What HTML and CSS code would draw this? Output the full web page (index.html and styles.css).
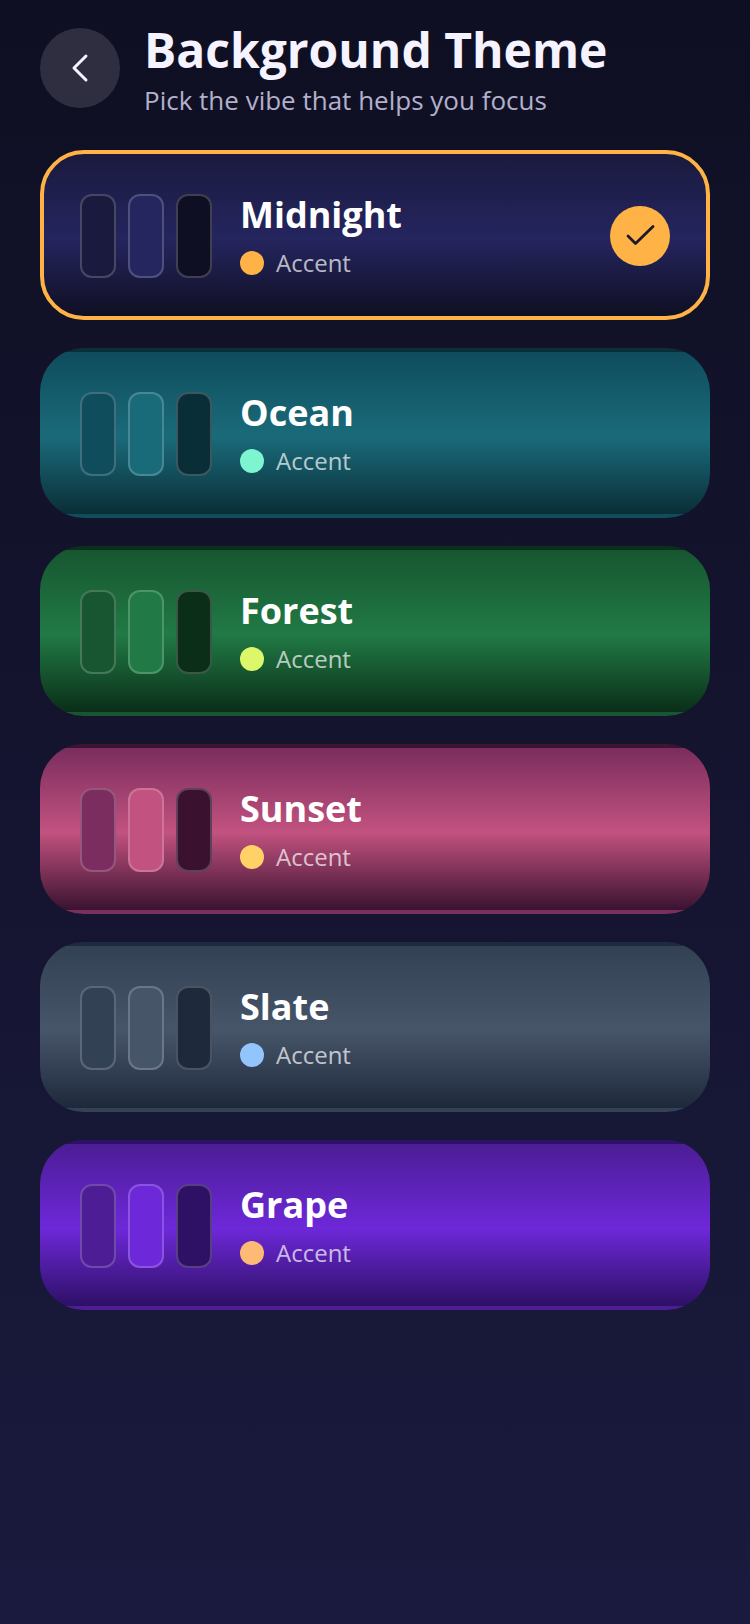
FILE: index.html
```html
<!DOCTYPE html>
<html lang="en">
<head>
    <meta charset="UTF-8">
    <meta name="viewport" content="width=device-width, initial-scale=1.0">
    <title>Background Theme</title>
    <link rel="stylesheet" href="styles.css">
</head>
<body>
    <main class="screen">
        <header class="top-bar">
            <button class="back-btn" type="button" aria-label="Back">
                <svg width="48" height="48" viewBox="0 0 48 48" fill="none" stroke="#f5f3ff" stroke-width="3" stroke-linecap="round" stroke-linejoin="round"><path d="M30 12 L18 24 L30 36"/></svg>
            </button>
            <div class="top-text">
                <h1>Background Theme</h1>
                <p>Pick the vibe that helps you focus</p>
            </div>
        </header>

        <section class="theme-list">
            <article class="theme-card midnight selected">
                <div class="swatches"><span class="swatch s1"></span><span class="swatch s2"></span><span class="swatch s3"></span></div>
                <div class="theme-info">
                    <h2>Midnight</h2>
                    <div class="accent-row"><span class="dot"></span><span class="accent-label">Accent</span></div>
                </div>
                <span class="check">
                    <svg width="36" height="36" viewBox="0 0 36 36" fill="none" stroke="#1a1a2e" stroke-width="2.8" stroke-linecap="round" stroke-linejoin="round"><path d="M6 18 L13.5 25.5 L31 8.5"/></svg>
                </span>
            </article>
            <article class="theme-card ocean">
                <div class="swatches"><span class="swatch s1"></span><span class="swatch s2"></span><span class="swatch s3"></span></div>
                <div class="theme-info">
                    <h2>Ocean</h2>
                    <div class="accent-row"><span class="dot"></span><span class="accent-label">Accent</span></div>
                </div>
            </article>
            <article class="theme-card forest">
                <div class="swatches"><span class="swatch s1"></span><span class="swatch s2"></span><span class="swatch s3"></span></div>
                <div class="theme-info">
                    <h2>Forest</h2>
                    <div class="accent-row"><span class="dot"></span><span class="accent-label">Accent</span></div>
                </div>
            </article>
            <article class="theme-card sunset">
                <div class="swatches"><span class="swatch s1"></span><span class="swatch s2"></span><span class="swatch s3"></span></div>
                <div class="theme-info">
                    <h2>Sunset</h2>
                    <div class="accent-row"><span class="dot"></span><span class="accent-label">Accent</span></div>
                </div>
            </article>
            <article class="theme-card slate">
                <div class="swatches"><span class="swatch s1"></span><span class="swatch s2"></span><span class="swatch s3"></span></div>
                <div class="theme-info">
                    <h2>Slate</h2>
                    <div class="accent-row"><span class="dot"></span><span class="accent-label">Accent</span></div>
                </div>
            </article>
            <article class="theme-card grape">
                <div class="swatches"><span class="swatch s1"></span><span class="swatch s2"></span><span class="swatch s3"></span></div>
                <div class="theme-info">
                    <h2>Grape</h2>
                    <div class="accent-row"><span class="dot"></span><span class="accent-label">Accent</span></div>
                </div>
            </article>
        </section>
    </main>
</body>
</html>
```
FILE: styles.css
```css
* {
    box-sizing: border-box;
}

body {
    margin: 0;
    font-family: "Open Sans", sans-serif;
    background: linear-gradient(180deg, #0f0f23 0%, #1a1a3e 100%);
    color: #f5f3ff;
}

.screen {
    width: 750px;
    height: 1624px;
    padding: 28px 40px 0;
    overflow: hidden;
}

.top-bar {
    display: flex;
    align-items: flex-start;
    gap: 24px;
    height: 122px;
}

.back-btn {
    display: flex;
    align-items: center;
    justify-content: center;
    flex-shrink: 0;
    width: 80px;
    height: 80px;
    padding: 0;
    border: none;
    border-radius: 50%;
    background: rgba(255, 255, 255, 0.13);
}

.top-text {
    margin-top: -8px;
}

.top-text h1 {
    margin: 0;
    font-size: 48px;
    line-height: 60px;
    font-weight: 700;
}

.top-text p {
    margin: 2px 0 0;
    font-size: 26px;
    line-height: 36px;
    color: #b3b0cc;
}

.theme-list {
    display: flex;
    flex-direction: column;
    gap: 28px;
}

.theme-card {
    --c1: #1a1a3e;
    --c2: #25255f;
    --c3: #0f0f23;
    --accent: #ffb347;
    display: flex;
    align-items: center;
    height: 170px;
    padding: 2px 36px 0;
    border: 4px solid transparent;
    border-radius: 44px;
    background-image: linear-gradient(180deg, var(--c1) 0%, var(--c2) 52%, var(--c3) 100%);
}

.theme-card.selected {
    border-color: var(--accent);
}

.ocean {
    --c1: #0f4c5c;
    --c2: #1a6b7a;
    --c3: #0a2e38;
    --accent: #7df5d0;
}

.forest {
    --c1: #175630;
    --c2: #217a45;
    --c3: #0a2e18;
    --accent: #dcf76a;
}

.sunset {
    --c1: #7a2d5e;
    --c2: #c2527f;
    --c3: #3a1230;
    --accent: #ffd166;
}

.slate {
    --c1: #334155;
    --c2: #475569;
    --c3: #1e293b;
    --accent: #93c5fd;
}

.grape {
    --c1: #4c1d95;
    --c2: #6d28d9;
    --c3: #2e1065;
    --accent: #fdba74;
}

.swatches {
    display: flex;
    gap: 12px;
    flex-shrink: 0;
}

.swatch {
    width: 36px;
    height: 84px;
    border: 2px solid rgba(255, 255, 255, 0.2);
    border-radius: 12px;
}

.s1 {
    background-color: var(--c1);
}

.s2 {
    background-color: var(--c2);
}

.s3 {
    background-color: var(--c3);
}

.theme-info {
    flex: 1;
    margin-left: 28px;
}

.theme-info h2 {
    margin: 0;
    font-size: 36px;
    line-height: 48px;
    font-weight: 700;
    color: #fff;
}

.accent-row {
    display: flex;
    align-items: center;
    gap: 12px;
    margin-top: 6px;
}

.dot {
    width: 24px;
    height: 24px;
    border-radius: 50%;
    background: var(--accent);
}

.accent-label {
    font-size: 24px;
    line-height: 36px;
    color: rgba(255, 255, 255, 0.7);
}

.check {
    display: flex;
    align-items: center;
    justify-content: center;
    flex-shrink: 0;
    width: 60px;
    height: 60px;
    border-radius: 50%;
    background: var(--accent);
}
```
